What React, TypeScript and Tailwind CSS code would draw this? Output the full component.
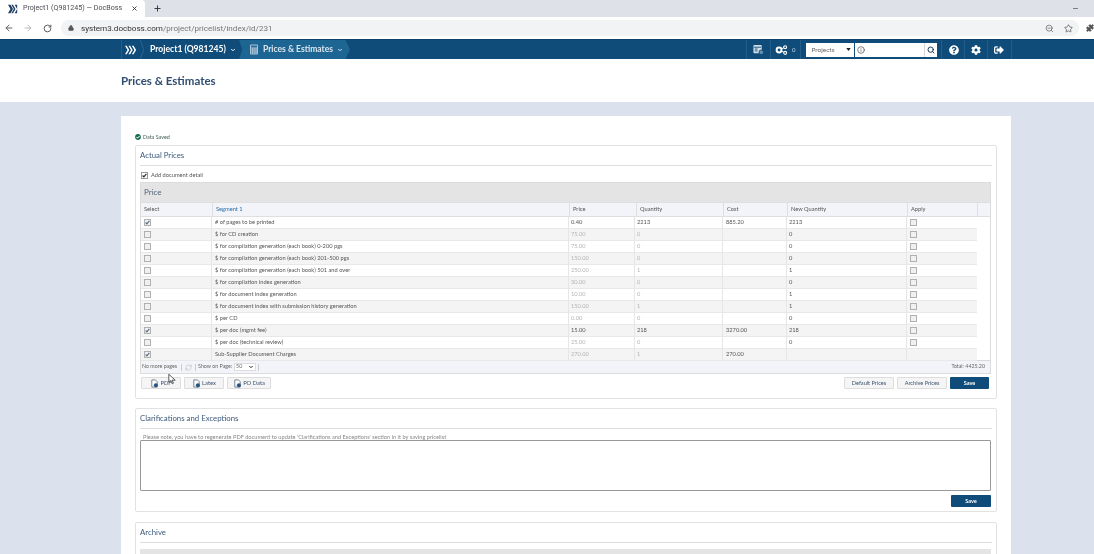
import { ArrowLeft, ArrowRight, RotateCw, Lock, ZoomOut, Star, Puzzle, X, Plus, Minus, ChevronDown, Search, Info, RefreshCw } from 'lucide-react';
import { FaCheckCircle, FaCog, FaQuestionCircle, FaSignOutAlt } from 'react-icons/fa';

const rows = [
  { on: true, name: '# of pages to be printed', price: '0.40', qty: '2213', cost: '885.20', nq: '2213', live: true },
  { name: '$ for CD creation', price: '75.00', qty: '0', cost: '', nq: '0' },
  { name: '$ for compilation generation (each book) 0-200 pgs', price: '75.00', qty: '0', cost: '', nq: '0' },
  { name: '$ for compilation generation (each book) 201-500 pgs', price: '150.00', qty: '0', cost: '', nq: '0' },
  { name: '$ for compilation generation (each book) 501 and over', price: '250.00', qty: '1', cost: '', nq: '1' },
  { name: '$ for compilation index generation', price: '30.00', qty: '0', cost: '', nq: '0' },
  { name: '$ for document index generation', price: '10.00', qty: '0', cost: '', nq: '1' },
  { name: '$ for document index with submission history generation', price: '150.00', qty: '1', cost: '', nq: '1' },
  { name: '$ per CD', price: '0.00', qty: '0', cost: '', nq: '0' },
  { on: true, name: '$ per doc (mgmt fee)', price: '15.00', qty: '218', cost: '3270.00', nq: '218', live: true },
  { name: '$ per doc (technical review)', price: '25.00', qty: '0', cost: '', nq: '0' },
  { on: true, name: 'Sub-Supplier Document Charges', price: '270.00', qty: '1', cost: '270.00', nq: '', noApply: true },
];

const headers = ['Select', 'Segment 1', 'Price', 'Quantity', 'Cost', 'New Quantity', 'Apply'];

function Tick({ color }: { color: string }) {
  return (
    <svg viewBox="0 0 8 8" className="h-[5px] w-[5px]" fill="none" stroke={color} strokeWidth="1.800">
      <path d="M1 4l2 2.200L7 1.500" />
    </svg>
  );
}

function Box({ on }: { on?: boolean }) {
  return (
    <span className="flex h-[7px] w-[7px] items-center justify-center border border-[#b0b0b0] bg-[#f0f0f0]">
      {on && <Tick color="#5a6c86" />}
    </span>
  );
}

function FileButton({ label, width }: { label: string; width: string }) {
  return (
    <button className={`flex h-[12px] items-center justify-center gap-[1px] rounded-[1px] border border-[#dddddd] bg-[#f5f5f5] text-[5.8px] text-[#3c5270] ${width}`}>
      <svg viewBox="0 0 10 10" className="h-[9px] w-[9px]">
        <path d="M2 1h4l2 2v6H2z" fill="#fff" stroke="#6a7a90" strokeWidth="1" />
        <circle cx="6.500" cy="7" r="2.200" fill="#25557f" />
      </svg>
      {label}
    </button>
  );
}

function GreyButton({ label }: { label: string }) {
  return (
    <button className="flex h-[12px] w-[50px] items-center justify-center rounded-[1px] border border-[#dddddd] bg-[#f5f5f5] text-[5.6px] text-[#3c5270]">
      {label}
    </button>
  );
}

function SaveButton({ className }: { className: string }) {
  return (
    <button className={`flex h-[12px] items-center justify-center rounded-[1px] bg-[#104c7a] text-[5.6px] font-bold text-white ${className}`}>
      Save
    </button>
  );
}

function Card({ title, className, children }: { title: string; className: string; children: React.ReactNode }) {
  return (
    <section className={`w-[862px] rounded-[2px] border border-[#e2e2e2] px-[4px] ${className}`}>
      <h2 className="flex h-[20px] items-center border-b border-[#dedede] text-[7.8px] leading-none text-[#3d5a7c]">{title}</h2>
      {children}
    </section>
  );
}

function Chrome() {
  return (
    <div className="font-['Roboto',sans-serif]">
      <div className="flex h-[17px] items-center bg-[#dee1e8]">
        <div className="flex h-full w-[145px] items-center rounded-tr-[4px] bg-white pl-[8px]">
          <svg viewBox="0 0 12 10" className="h-[10px] w-[10px]">
            <path d="M0 0h3l3 5-3 5H0l3-5zM4 0h2l3 5-3 5H4l3-5zM8 0h3v10H8l3-5z" fill="#1d3f66" />
          </svg>
          <span className="ml-[5px] w-[108px] text-[7.100px] text-[#4a4d52]">Project1 (Q981245) — DocBoss</span>
          <X className="h-[7px] w-[7px] text-[#333]" strokeWidth={3} />
        </div>
        <Plus className="ml-[8px] h-[9px] w-[9px] text-[#333]" strokeWidth={2.5} />
        <Minus className="ml-auto mr-[15px] h-[7px] w-[7px] text-[#555]" strokeWidth={2.5} />
      </div>
      <div className="flex h-[22px] items-center bg-white pl-[4px]">
        <ArrowLeft className="h-[10px] w-[10px] text-[#555]" strokeWidth={2.2} />
        <ArrowRight className="ml-[9px] h-[10px] w-[10px] text-[#b5b5b5]" strokeWidth={2.2} />
        <RotateCw className="ml-[10px] h-[9px] w-[9px] text-[#555]" strokeWidth={2.5} />
        <div className="ml-[9px] flex h-[16px] w-[1019px] items-center rounded-full bg-[#f1f3f4] pl-[7px]">
          <Lock className="h-[6px] w-[6px] fill-[#555] text-[#555]" />
          <span className="ml-[7px] text-[8.100px] text-[#333]">
            system3.docboss.com<span className="text-[#777]">/project/pricelist/index/id/231</span>
          </span>
          <ZoomOut className="ml-auto h-[9px] w-[9px] text-[#666]" />
          <Star className="ml-[10px] mr-[6px] h-[9px] w-[9px] text-[#555]" />
        </div>
        <Puzzle className="ml-[7px] h-[8px] w-[8px] shrink-0 fill-[#555] text-[#555]" />
      </div>
    </div>
  );
}

function AppBar() {
  const divider = 'h-full border-l border-[#235d8a]';
  return (
    <div className="flex h-[20px] items-stretch border-t border-[#0d3f68] bg-[#104c7a] pl-[121px] text-white">
      <div className="flex w-[19px] items-center justify-center border-l border-[#235d8a]">
        <svg viewBox="0 0 14 10" className="h-[10px] w-[12px]" fill="#fff">
          <path d="M0 0h2l3 5-3 5H0l3-5zM4 0h2l3 5-3 5H4l3-5zM8 0h2l3 5-3 5H8l3-5z" />
        </svg>
      </div>
      <svg viewBox="0 0 4 20" className="h-full w-[4px]" fill="none" stroke="#2a6794"><path d="M0 0l4 10-4 10" /></svg>
      <div className="ml-[6px] flex w-[89px] items-center text-[8.600px] font-bold">
        Project1 (Q981245)
        <ChevronDown className="ml-[4px] h-[6px] w-[6px] shrink-0" strokeWidth={4} />
      </div>
      <div className="flex w-[111px] items-center bg-[#1d6593] pl-[10px] text-[8.500px] font-bold text-[#dce6ee] [clip-path:polygon(0_0,96%_0,100%_50%,96%_100%,0_100%,3%_50%)]">
        <svg viewBox="0 0 10 10" className="h-[11px] w-[10px]">
          <rect x="1" width="8" height="10" rx="1" fill="#a9c3d6" />
          <rect x="2" y="1" width="6" height="2" fill="#2d6d98" />
          <path d="M2 4.500h6M2 6.500h6M2 8.500h6" stroke="#2d6d98" strokeDasharray="1.200 1" />
        </svg>
        <span className="ml-[4px]">Prices &amp; Estimates</span>
        <ChevronDown className="ml-[4px] h-[6px] w-[6px]" strokeWidth={4} />
      </div>
      <div className="ml-[396px] flex items-center">
        <span className={divider} />
        <svg viewBox="0 0 12 12" className="ml-[6px] h-[11px] w-[11px]">
          <rect x="0.500" y="1" width="9" height="9" rx="1" fill="#d5e0e9" />
          <path d="M1 3.500h8M2 5.500h3M2 7.500h3" stroke="#104c7a" />
          <circle cx="9" cy="9" r="2.500" fill="#5d93b8" stroke="#104c7a" />
        </svg>
        <span className={`ml-[6px] ${divider}`} />
        <svg viewBox="0 0 16 12" className="ml-[4px] h-[10px] w-[13px]" fill="none" stroke="#fff">
          <circle cx="5" cy="6" r="3" strokeWidth="2.400" />
          <circle cx="12.500" cy="2.500" r="1.800" strokeWidth="1.400" />
          <circle cx="12.500" cy="9.500" r="1.800" strokeWidth="1.400" />
          <path d="M7.500 5l3.500-2M7.500 7l3.500 2" strokeWidth="1.200" />
        </svg>
        <span className="ml-[4px] text-[6px] text-[#c9d8e4]">0</span>
        <span className={`ml-[5px] ${divider}`} />
        <div className="ml-[5px] flex h-[14px] w-[48px] items-center bg-white pl-[5px] text-[6.500px] text-[#666]">
          Projects
          <svg viewBox="0 0 6 4" className="ml-auto mr-[3px] h-[3px] w-[5px]"><path d="M0 0h6L3 4z" fill="#222" /></svg>
        </div>
        <div className="ml-[1px] flex h-[14px] w-[82px] items-center bg-white pl-[2px]">
          <Info className="h-[8px] w-[8px] text-[#444]" />
          <span className="ml-auto flex h-full w-[13px] items-center justify-center border-l border-[#d8d8d8]">
            <Search className="h-[8px] w-[8px] text-[#16395c]" strokeWidth={3} />
          </span>
        </div>
        <span className={`ml-[4px] ${divider}`} />
        <FaQuestionCircle className="ml-[7px] h-[10px] w-[10px]" />
        <span className={`ml-[5px] ${divider}`} />
        <FaCog className="ml-[6px] h-[10px] w-[10px]" />
        <span className={`ml-[6px] ${divider}`} />
        <FaSignOutAlt className="ml-[6px] h-[10px] w-[10px]" />
        <span className={`ml-[7px] ${divider}`} />
      </div>
    </div>
  );
}

function PriceTable() {
  return (
    <div className="w-[851px] border border-[#dcdcdc] text-[5.700px]">
      <div className="flex h-[19px] items-center bg-[#e4e4e4] pb-[1px] pl-[3px] text-[8px] text-[#54657c]">Price</div>
      <div className="h-[15px] border-y border-[#dfdfdf] bg-[#f3f4f9] text-[#555]">
        <div className="grid h-full grid-cols-[72px_357px_67px_87px_64px_120px_70px]">
          {headers.map((h, i) => (
            <div key={h} className={`flex items-center border-r border-[#dfdfdf] pl-[3px] ${i === 1 ? 'text-[#2a6fa8]' : ''}`}>{h}</div>
          ))}
        </div>
      </div>
      <div className="h-[144px] border-b border-[#d8d8d8]">
        {rows.map((r, i) => (
          <div key={r.name} className={`grid h-[12px] w-[836px] grid-cols-[71px_357px_66px_88px_64px_120px_70px] border-b border-[#e8e8e8] text-[#555] ${i % 2 ? 'bg-[#f4f4f4]' : 'bg-white'}`}>
            <div className="flex items-center border-r border-[#e6e6e6] pl-[3px]"><Box on={r.on} /></div>
            <div className="flex items-center border-r border-[#e6e6e6] pl-[3px]">{r.name}</div>
            <div className={`flex items-center border-r border-[#e6e6e6] pl-[2px] ${r.live ? '' : 'text-[#b5b5b5]'}`}>{r.price}</div>
            <div className={`flex items-center border-r border-[#e6e6e6] pl-[2px] ${r.live ? '' : 'text-[#b5b5b5]'}`}>{r.qty}</div>
            <div className="flex items-center border-r border-[#e6e6e6] pl-[3px]">{r.cost}</div>
            <div className="flex items-center border-r border-[#e6e6e6] pl-[2px]">{r.nq}</div>
            <div className="flex items-center pl-[3px]">{!r.noApply && <Box />}</div>
          </div>
        ))}
      </div>
      <div className="flex h-[12px] items-center bg-[#f3f4f9] pl-[1px] pr-[5px] text-[5.300px] text-[#666]">
        <span>No more pages</span>
        <span className="ml-[4px] h-[7px] border-l border-[#ccc]" />
        <RefreshCw className="ml-[3px] h-[7px] w-[7px] text-[#bbb]" />
        <span className="ml-[3px] h-[7px] border-l border-[#ccc]" />
        <span className="ml-[2px]">Show on Page:</span>
        <span className="ml-[2px] flex h-[8px] w-[22px] items-center justify-between border border-[#ddd] bg-white px-[1px]">
          50
          <ChevronDown className="h-[6px] w-[6px] text-[#333]" strokeWidth={4} />
        </span>
        <span className="ml-[2px] h-[7px] border-l border-[#ccc]" />
        <span className="ml-auto">Total: 4425.20</span>
      </div>
    </div>
  );
}

export default function App() {
  return (
    <div className="relative h-[554px] w-[1094px] overflow-hidden bg-[#dbe2ee] font-['Lato',sans-serif] blur-[0.45px]">
      <Chrome />
      <AppBar />
      <div className="flex h-[43px] items-center bg-white pl-[121px] text-[11.500px] font-bold text-[#2f4d70]">Prices &amp; Estimates</div>
      <main className="ml-[121px] mt-[14px] h-[500px] w-[890px] bg-white pl-[14px] pt-[17px]">
        <div className="flex h-[8px] items-center gap-[2px] text-[5.400px] text-[#3f5f55]">
          <FaCheckCircle className="h-[6px] w-[6px] text-[#0f6b4a]" />
          Data Saved
        </div>
        <Card title="Actual Prices" className="mt-[4px] h-[254px]">
          <div className="flex h-[16px] items-center gap-[3px] pl-[1px] pt-[2px] text-[5.700px] text-[#555]">
            <span className="flex h-[7px] w-[7px] items-center justify-center border border-[#999] bg-white">
              <Tick color="#222" />
            </span>
            Add document detail
          </div>
          <PriceTable />
          <div className="mt-[3px] flex items-center pl-[1px]">
            <div className="flex gap-[3px]">
              <FileButton label="PDF" width="w-[40px]" />
              <FileButton label="Latex" width="w-[40px]" />
              <FileButton label="PO Data" width="w-[44px]" />
            </div>
            <div className="ml-auto mr-[3px] flex gap-[3px]">
              <GreyButton label="Default Prices" />
              <GreyButton label="Archive Prices" />
              <SaveButton className="w-[39px]" />
            </div>
          </div>
        </Card>
        <Card title="Clarifications and Exceptions" className="mt-[9px] h-[104px]">
          <p className="mt-[4px] h-[7px] pl-[3px] text-[5.670px] leading-[7px] text-[#888]">
            Please note, you have to regenerate PDF document to update 'Clarifications and Exceptions' section in it by saving pricelist
          </p>
          <div className="h-[51px] w-[851px] rounded-[1px] border border-[#999] bg-white" />
          <div className="mt-[4px] flex justify-end pr-[1px]">
            <SaveButton className="w-[40px]" />
          </div>
        </Card>
        <Card title="Archive" className="mt-[10px] h-[60px]">
          <div className="mt-[6px] h-[20px] w-[851px] bg-[#e4e4e4]" />
        </Card>
      </main>
      <svg viewBox="0 0 10 14" className="absolute left-[168px] top-[373px] h-[12px] w-[8px]">
        <path d="M1 1v10l2.500-2 1.800 4 1.500-.7-1.800-3.800H9z" fill="#fff" stroke="#333" strokeWidth="1" />
      </svg>
    </div>
  );
}
